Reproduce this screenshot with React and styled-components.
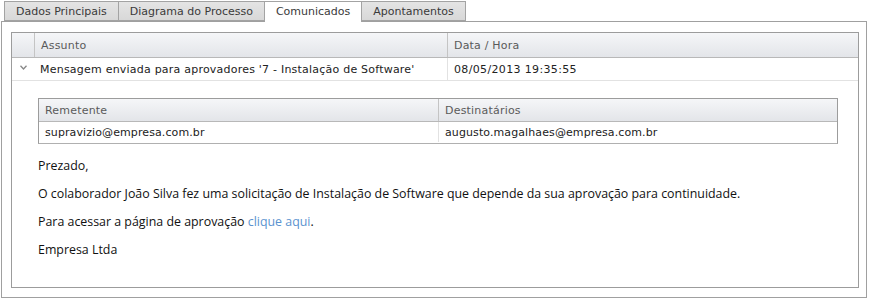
import React from "react";
import styled, { createGlobalStyle } from "styled-components";

const Global = createGlobalStyle`
  html, body { margin: 0; padding: 0; background: #fff; }
  body { font-family: "DejaVu Sans", Verdana, sans-serif; }
`;

const Page = styled.div`
  width: 869px;
  height: 298px;
  box-sizing: border-box;
  padding: 1px 2px 0 1px;
  display: flex;
  flex-direction: column;
`;

const TabStrip = styled.div`
  display: flex;
  padding-left: 3px;
  height: 20px;
  position: relative;
  z-index: 1;
`;

const Tab = styled.div`
  box-sizing: border-box;
  height: ${(p) => (p.$active ? "21px" : "20px")};
  padding: 0 ${(p) => p.$pad}px;
  border: 1px solid #a3a3a3;
  border-bottom: ${(p) => (p.$active ? "none" : "1px solid #a3a3a3")};
  border-left: ${(p) => (p.$first ? "1px solid #a3a3a3" : "none")};
  background: ${(p) => (p.$active ? "#fff" : "linear-gradient(#e4e4e4, #d8d8d8)")};
  color: #3a3a3a;
  font-size: 11px;
  line-height: 19px;
  white-space: nowrap;
`;

const Panel = styled.div`
  flex: 1;
  border: 1px solid #a0a0a0;
  padding: 10px 7px 9px 9px;
  display: flex;
`;

const Grid = styled.div`
  flex: 1;
  border: 1px solid #9c9c9c;
  display: flex;
  flex-direction: column;
`;

const Row = styled.div`
  display: grid;
  grid-template-columns: ${(p) => p.$cols};
  height: ${(p) => p.$h}px;
  box-sizing: border-box;
  border-bottom: 1px solid ${(p) => p.$line};
  background: ${(p) => p.$bg};
`;

const Cell = styled.div`
  display: flex;
  align-items: center;
  padding-left: ${(p) => p.$pl ?? 6}px;
  border-left: ${(p) => (p.$divider ? `1px solid ${p.$divider}` : "none")};
  font-size: 11px;
  letter-spacing: ${(p) => p.$ls ?? 0.2}px;
  color: ${(p) => p.$color || "#222"};
  white-space: nowrap;
  overflow: hidden;
`;

const Chevron = styled.svg`
  width: 7px;
  height: 5px;
  margin: 0 auto 3px;
`;

const Detail = styled.div`
  padding: 17px 20px 0 26px;
`;

const SubTable = styled.div`
  border: 1px solid #9c9c9c;
  border-bottom-color: #b0b0b0;
`;

const Message = styled.div`
  padding-top: 8px;
  font-family: "Open Sans", "Noto Sans", sans-serif;
  font-size: 12.4px;
  color: #111;
`;

const Para = styled.p`
  margin: 0;
  line-height: 28px;
  white-space: nowrap;
`;

const Link = styled.a`
  color: #5b93cf;
  text-decoration: none;
`;

const HEAD_BG = "linear-gradient(#f5f6f8, #e3e5e9)";

export default function App() {
  return (
    <>
      <Global />
      <Page>
        <TabStrip>
          <Tab $first $pad={11}>Dados Principais</Tab>
          <Tab $pad={11}>Diagrama do Processo</Tab>
          <Tab $active $pad={11}>Comunicados</Tab>
          <Tab $pad={11}>Apontamentos</Tab>
        </TabStrip>
        <Panel>
          <Grid>
            <Row $cols="22px 413px 1fr" $h={25} $line="#b8b8b8" $bg={HEAD_BG}>
              <Cell />
              <Cell $divider="#c4c4c4" $color="#5a5a5a">Assunto</Cell>
              <Cell $divider="#c4c4c4" $color="#5a5a5a">Data / Hora</Cell>
            </Row>
            <Row $cols="22px 413px 1fr" $h={23} $line="#e2e2e2" $bg="#fff">
              <Cell $pl={0}>
                <Chevron viewBox="0 0 7 5">
                  <path d="M0.5 0.8 L3.5 4 L6.5 0.8" fill="none" stroke="#888" strokeWidth="1.3" />
                </Chevron>
              </Cell>
              <Cell $color="#222" $ls={0.22}>Mensagem enviada para aprovadores '7 - Instalação de Software'</Cell>
              <Cell $divider="#e2e2e2" $color="#222" $ls={0.35}>08/05/2013 19:35:55</Cell>
            </Row>
            <Detail>
              <SubTable>
                <Row $cols="399px 1fr" $h={23} $line="#b8b8b8" $bg={HEAD_BG}>
                  <Cell $color="#5a5a5a">Remetente</Cell>
                  <Cell $divider="#c4c4c4" $color="#5a5a5a">Destinatários</Cell>
                </Row>
                <Row $cols="399px 1fr" $h={21} $line="transparent" $bg="#fff">
                  <Cell $ls={0.1}>supravizio@empresa.com.br</Cell>
                  <Cell $divider="#e2e2e2" $ls={0.1}>augusto.magalhaes@empresa.com.br</Cell>
                </Row>
              </SubTable>
              <Message>
                <Para>Prezado,</Para>
                <Para>O colaborador João Silva fez uma solicitação de Instalação de Software que depende da sua aprovação para continuidade.</Para>
                <Para>Para acessar a página de aprovação <Link href="#">clique aqui</Link>.</Para>
                <Para>Empresa Ltda</Para>
              </Message>
            </Detail>
          </Grid>
        </Panel>
      </Page>
    </>
  );
}
